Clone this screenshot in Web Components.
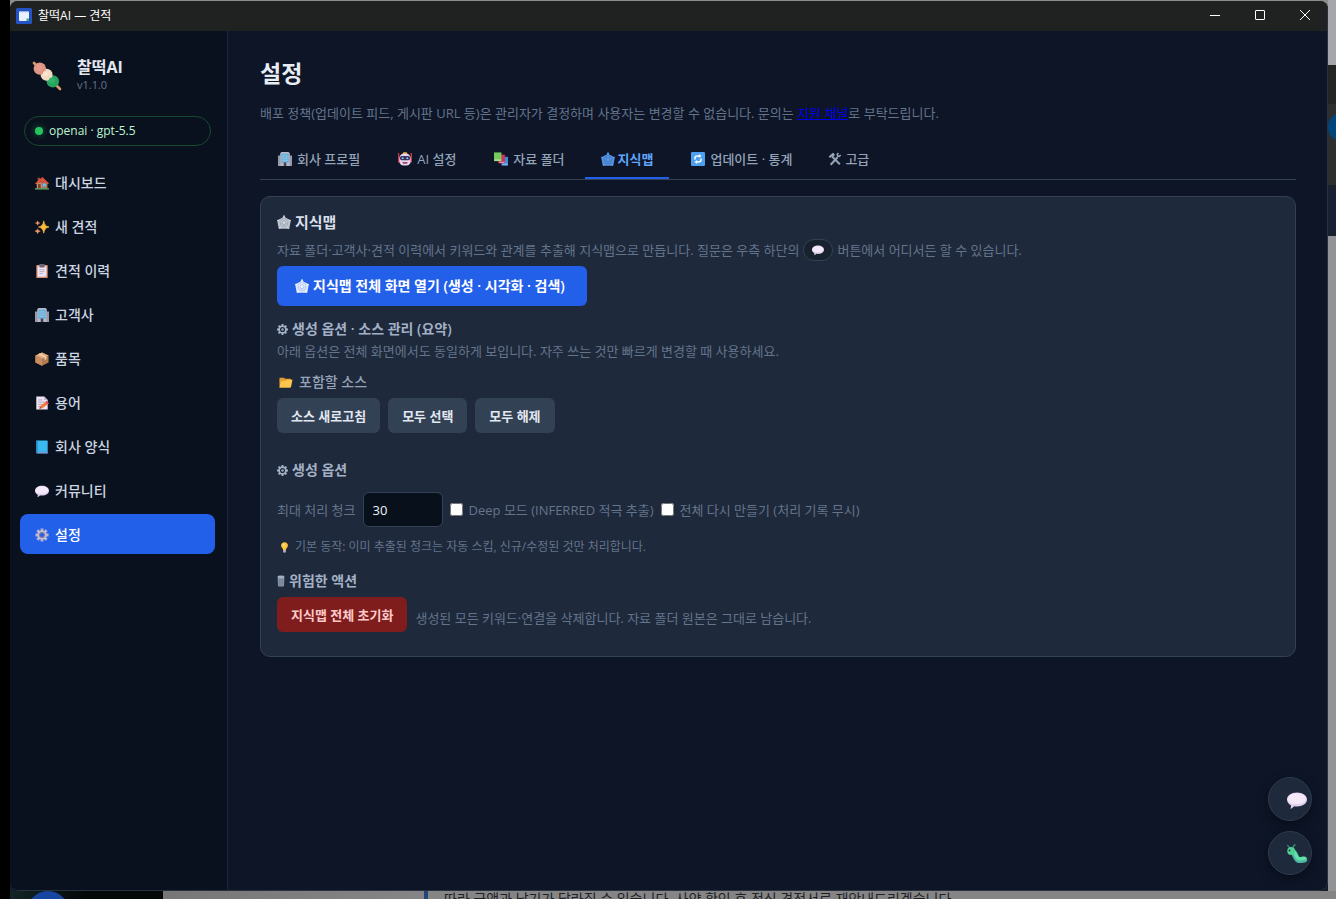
<!DOCTYPE html>
<html lang="ko">
<head>
<meta charset="utf-8">
<meta name="viewport" content="width=device-width, initial-scale=1">
<title>찰떡AI — 견적</title>
<style>
  html, body { margin: 0; height: 100%; }
  body {
    background: #000;
    color: #e2e8f0;
    font-family: "Open Sans", "Noto Sans CJK KR", sans-serif;
    font-size: 13px;
    line-height: 20px;
    --bg: #0d1527;
    --side: #0a111e;
    --card: #1e293b;
    --line: #334155;
    --muted: #64748b;
    --soft: #94a3b8;
    --accent: #2360ea;
  }
</style>
</head>
<body>
<desk-top>
  <app-window>
    <title-bar slot="title">찰떡AI — 견적</title-bar>
    <side-bar slot="side">
      <nav-item icon="house">대시보드</nav-item>
      <nav-item icon="sparkles">새 견적</nav-item>
      <nav-item icon="clipboard">견적 이력</nav-item>
      <nav-item icon="building">고객사</nav-item>
      <nav-item icon="box">품목</nav-item>
      <nav-item icon="memo">용어</nav-item>
      <nav-item icon="book">회사 양식</nav-item>
      <nav-item icon="speech">커뮤니티</nav-item>
      <nav-item icon="gearColor" active>설정</nav-item>
    </side-bar>
    <settings-page>
      <tab-bar slot="tabs">
        <tab-item icon="building">회사 프로필</tab-item>
        <tab-item icon="robot">AI 설정</tab-item>
        <tab-item icon="books">자료 폴더</tab-item>
        <tab-item icon="web" glyph active>지식맵</tab-item>
        <tab-item icon="refresh">업데이트 · 통계</tab-item>
        <tab-item icon="tools" glyph>고급</tab-item>
      </tab-bar>
      <knowledge-panel></knowledge-panel>
    </settings-page>
    <round-button slot="float" icon="speech" label="질문하기"></round-button>
    <round-button slot="float" icon="bug" label="버그 신고"></round-button>
  </app-window>
</desk-top>

<script>
const ICONS = {
  house: `<path d="M2 7h12v7H2z" fill="#c98f6c"/><path d="M8 7h6v7H8z" fill="#a9755c"/><path d="M3 2h3v4H3z" fill="#9c4a3a"/><path d="M8.500 1 0 8.500l1.500 1L8 5l6.500 4.500L16 8.500z" fill="#e2563f"/><path d="M8.500 2 15 8.500H8L5 5z" fill="#d5513c"/><rect x="3.500" y="9" width="3" height="5" fill="#7c3f33"/><rect x="9" y="8.500" width="3.500" height="3.500" fill="#5bc3f0"/><path d="M0 14h16v1.500H0z" fill="#66b567"/>`,
  sparkles: `<path d="M10 1c.9 4.500 2 6 6 7-4 1-5.100 2.500-6 7C9.100 10.500 8 9 4 8c4-1 5.100-2.500 6-7z" fill="#fbb83c" stroke="#fbb83c" stroke-width=".8"/><path d="M3 1c.4 1.500 1 2 2.500 2.500C4 4 3.400 4.500 3 6 2.600 4.500 2 4 .5 3.500 2 3 2.600 2.500 3 1zM3 10c.4 1.700 1.200 2.300 3 2.800-1.800.5-2.600 1-3 2.700-.4-1.700-1.200-2.200-3-2.700 1.800-.5 2.600-1.100 3-2.800z" fill="#f59a68" stroke="#f59a68" stroke-width=".6"/>`,
  clipboard: `<rect x="1.500" y="1" width="13" height="15" rx="1" fill="#d69270"/><rect x="3" y="2.500" width="10" height="12" fill="#f1e6f6"/><path d="M5 0h6v4H5z" fill="#6d6372"/><path d="M5 6.500h6M5 8.700h6M5 11h4" stroke="#a99fb3" stroke-width=".9"/><path d="m10.500 14.500 2.500-2.500v2.500z" fill="#c6b8cf"/>`,
  building: `<path d="M0 4h3v12H0zM13 4h3v12h-3z" fill="#9b98a8"/><path d="M2.500 1.500 4 0h8l1.500 1.500V16h-11z" fill="#b6b9ca"/><path d="M4 2h8v10H4z" fill="#3f9fd4"/><path d="M5.800 2v10M8 2v10M10.200 2v10M4 4.500h8M4 7h8M4 9.500h8" stroke="#b9d4ea" stroke-width=".7"/><rect x="6.500" y="12" width="3" height="4" fill="#4a3f55"/>`,
  box: `<path d="m8 .5 7.500 3.500v8L8 15.800.5 12V4z" fill="#b57a52"/><path d="m8 .5 7.500 3.500L8 7.700.5 4z" fill="#e0ab7e"/><path d="M8 7.700v8.100L.5 12V4z" fill="#c98d62"/><path d="m3.500 2.500 7.500 3.700v3l2-1V5.300L5.500 1.500z" fill="#f2d5a6"/>`,
  memo: `<path d="M1.500.5h9l4 4V15.500h-13z" fill="#efe5f5"/><path d="M10.500.5v4h4z" fill="#c2b4cd"/><path d="M3.500 4.500h5M3.500 7h8M3.500 9.500h5M3.500 12h3" stroke="#a79ab2" stroke-width=".9"/><path d="m5 14.500 1-3L13 6l2.500 2.500-7 5.500z" fill="#f27b3d"/><path d="m12 6.800 1.500-1.300 2.500 2.800-1.500 1.200z" fill="#e4476a"/><path d="m5 14.500.7-2 1.500 1.300z" fill="#54404c"/>`,
  book: `<rect x="1.500" y=".5" width="13" height="15" rx=".8" fill="#3cb9ef"/><path d="M1.500.5h1.800v13H1.500z" fill="#2595d3"/><path d="M2.500 13.500h12v2h-12z" fill="#5870b8"/><path d="M3 13.700h11.500v.9H3z" fill="#8fa9dc"/>`,
  speech: `<path d="M8 2c4.500 0 8 2.400 8 5.600s-3.500 5.600-8 5.600c-.8 0-1.600-.1-2.300-.2-.8 1-1.800 1.700-2.900 2 .4-.9.500-1.900.3-2.800C1.200 11.200 0 9.500 0 7.600 0 4.400 3.500 2 8 2z" fill="#e0d0ef"/><path d="M7.500 2.500c4 0 7 1.500 7.700 4 .2 2.800-3.200 4.700-7.700 4.700S0 9.700.6 6.800C1.300 4 4 2.500 7.500 2.500z" fill="#f3e9f8"/>`,
  gearColor: `<g stroke="#b9b4d0" stroke-width="3.200"><path d="M8 .5v15M.5 8h15M2.700 2.700l10.600 10.600M13.300 2.700 2.700 13.300"/></g><circle cx="8" cy="8" r="5.200" fill="#c4c0da"/><circle cx="8" cy="8" r="3.400" fill="#7773a0"/><circle cx="8" cy="8" r="2.100" fill="#2360ea"/>`,
  robot: `<path d="M.8 1v7M15.200 1v7" stroke="#e5424c" stroke-width="1.300"/><path d="M5 2.500h6L10 .3H6z" fill="#f5a74b"/><path d="M0 7h2v5H0zM14 7h2v5h-2z" fill="#d52e51"/><rect x="1.500" y="2" width="13" height="13.500" rx="5" fill="#e7d5ef"/><rect x="2.200" y="4.500" width="11.600" height="5" rx="2" fill="#42305e"/><circle cx="5.300" cy="7" r="1.100" fill="#6fe1f9"/><circle cx="10.700" cy="7" r="1.100" fill="#6fe1f9"/><rect x="5" y="11.500" width="6" height="1.800" rx=".9" fill="#a04b5d"/>`,
  books: `<rect x="8.500" y="5.500" width="7.500" height="10" fill="#3c8be0"/><path d="M9.500 13h6v2h-6z" fill="#7fb6ec"/><rect x="5" y="3" width="7.500" height="10" fill="#cf3556"/><path d="M6 11h6v1.500H6z" fill="#e690a6"/><rect y=".5" width="8.500" height="10" fill="#76c95c"/><path d="M.8 8.700H8v1.400H.8z" fill="#b9e3a9"/>`,
  refresh: `<rect width="16" height="16" rx="1.500" fill="#4d9ff0"/><g fill="none" stroke="#fff" stroke-width="1.700"><path d="M4.500 8.500V6.800C4.500 5.300 6 4.500 8 4.500h1.500M11.500 7.500v1.700c0 1.500-1.500 2.300-3.500 2.300H6.500"/></g><path d="M9 2.300 12 4.500 9 6.800zM7 9.200 4 11.500 7 13.700z" fill="#fff"/>`,
  web: `<path d="m8 .3 2 2.700 5.800 2.900-.8 4.600-1 5.200H2l-1-5.200L.2 5.900 6 3z" fill="currentColor" opacity=".85"/><g fill="none" stroke="currentColor" stroke-width=".8"><path d="M8 0v9M0 6l8 3M16 6 8 9M2.500 16 8 9M13.500 16 8 9"/></g><g fill="none" stroke="var(--web-gap, #5c687d)" stroke-width=".6" opacity=".6"><path d="m8 3.500 4.800 3.600-1.800 5.700H5L3.200 7.100zM8 6.200l2.400 1.900-.9 2.700h-3l-.9-2.700z"/></g>`,
  tools: `<g stroke="currentColor" fill="none"><path d="m4.500 5 9 9" stroke-width="2.400"/><path d="M11 6 3 14.500" stroke-width="2.400"/><path d="m1.500 6 5-4.300" stroke-width="2.600"/><path d="M14.500 3.500 13 5l-2-.4-.4-2.100L12 1.200" stroke-width="1.800"/></g><path d="M3 4 6 1.200 8 3 5.500 6z" fill="currentColor"/>`,
  gear: `<g stroke="currentColor" fill="none"><circle cx="8" cy="8" r="5" stroke-width="2.600"/><g stroke-width="2.800"><path d="M8 0v3M8 13v3M0 8h3M13 8h3M2.300 2.300l2.200 2.200M11.500 11.500l2.200 2.200M13.700 2.300l-2.200 2.200M4.500 11.500l-2.200 2.200"/></g><circle cx="8" cy="8" r="1" stroke-width="1.600"/></g>`,
  folder: `<path d="M0 2h5.500L7 3.500h7V6H0z" fill="#e89a2c"/><path d="M0 5V14h13z" fill="#f0ac38"/><path d="M2.500 5.800h5L9 4.500h7l-2 9.500H0z" fill="#ffc84c"/>`,
  bulb: `<path d="M8 .5c3 0 5 2.100 5 4.700 0 2.700-2.500 3.500-3 6.300H6C5.500 8.700 3 7.900 3 5.200 3 2.600 5 .5 8 .5z" fill="#fdc33e"/><path d="M5.500 3.500c.6-1 1.500-1.500 2.500-1.500v6z" fill="#ffe79a"/><path d="M6 11.500h4v2.700L9 15.500H7l-1-1.300z" fill="#b5adc0"/>`,
  trash: `<ellipse cx="6" cy="2.600" rx="4.600" ry="1.800" fill="currentColor"/><path d="M1.500 3.500h9L10 14.500c-1 1.300-7 1.300-8 0z" fill="currentColor" opacity=".8"/><path d="M3.800 5v9M6 5v9M8.200 5v9" stroke="#5a687d" stroke-width=".6"/>`,
  bug: `<path d="M2.200 3.500C1.500 1.800.8 1.200 0 1M4.800 3.200C5 1.500 5.800.7 6.800.5" fill="none" stroke="#3e9575" stroke-width="1"/><path d="M3.500 6c3.500 0 3 6.500 6 6.800 2 .3 3-.3 4.300-.4" fill="none" stroke="#4bb5a5" stroke-width="4.800" stroke-linecap="round"/><path d="M4 5.200c3 .6 3 6 5.500 6.600 1.800.3 3-.3 4.300-.3" fill="none" stroke="#5fe0a4" stroke-width="2.800" stroke-linecap="round"/><circle cx="3.300" cy="5.500" r="3.100" fill="#50cf93"/><circle cx="2" cy="5.200" r=".8" fill="#23413c"/>`,
  dango: `<path d="m1.500 1.500 13 13" stroke="#d79a6c" stroke-width="1.300" stroke-linecap="round"/><circle cx="10.900" cy="10.700" r="3.100" fill="#27a55f"/><circle cx="7.800" cy="7.400" r="3" fill="#f3dcc3"/><circle cx="4.400" cy="4.300" r="3.100" fill="#df9484"/><circle cx="3.900" cy="3.800" r="1.800" fill="#e39c8c"/><circle cx="7.300" cy="6.800" r="1.300" fill="#f8e5cf"/><circle cx="10.400" cy="10.200" r="1.500" fill="#35b069"/>`,
  app: `<rect width="16" height="16" rx="1.500" fill="#2454c4"/><rect x="3" y="3.500" width="10" height="9.500" rx="1" fill="#e9f1fb"/><path d="M3.500 3h1v2h-1zM6 3h1v2H6zM9 3h1v2H9zM11.500 3h1v2h-1z" fill="#b9cfee"/><path d="M10.500 10.500h2.500V13h-2.500z" fill="#37b27c"/>`
};

const make = (tag, css, html) => customElements.define(tag, class extends HTMLElement {
  constructor() {
    super();
    this.attachShadow({ mode: "open" });
  }
  connectedCallback() {
    const body = typeof html === "function" ? html(this) : html;
    this.shadowRoot.innerHTML = `<style>*{box-sizing:border-box}${css}</style>${body}`;
  }
});

make("ui-icon",
  `:host{display:inline-block;width:14px;height:14px;flex:none} svg{display:block;width:100%;height:100%;overflow:visible}`,
  el => `<svg viewBox="${el.getAttribute("name") === "trash" ? "1 0 10 16" : "0 0 16 16"}" aria-hidden="true">${ICONS[el.getAttribute("name")]}</svg>`);

/* Desktop: the window with strips of other windows showing at its right and bottom edges */
make("desk-top", `
  :host{display:grid;min-height:100vh;grid-template-columns:10px minmax(0,1fr) 8px;grid-template-rows:minmax(0,1fr) 8px;background:#000}
  .main{grid-column:2;display:grid;background:linear-gradient(#8d8d8d,#8d8d8d) top/100% 20px no-repeat,#141d2c}
  .right{grid-column:3;display:flex;flex-direction:column;overflow:hidden;background:#929397}
  .a{height:65px;background:#a5a6ac}.b{height:39px;background:#232424}
  .c{height:81px;background:#2d2f2f;padding-top:8px}.c i{display:block;width:30px;height:30px;border-radius:50%;background:#00467c}
  .d{height:51px;background:#192131}
  .below{grid-column:2 / 4;grid-row:2;display:flex;overflow:hidden;background:#858585;color:#202126}
  .dark{width:153px;background:linear-gradient(90deg,#132527,#050808 50%);padding-left:17px}
  .dark i{display:block;width:42px;height:42px;border-radius:50%;background:#17459f}
  .sheet{width:261px;background:linear-gradient(90deg,#777,#858585)}
  .bar{width:4px;background:#24447c}
  p{margin:0;padding-left:16px;line-height:16px;white-space:nowrap;font-size:14px}`,
  `<div class="main"><slot></slot></div>
   <div class="right"><div class="a"></div><div class="b"></div><div class="c"><i></i></div><div class="d"></div></div>
   <div class="below"><div class="dark"><i></i></div><div class="sheet"></div><div class="bar"></div><p>따라 금액과 납기가 달라질 수 있습니다. 사양 확인 후 정식 견적서로 재안내드리겠습니다.</p></div>`);

make("app-window", `
  :host{display:grid;position:relative;margin-top:1px;grid-template-rows:30px 1fr;grid-template-columns:218px minmax(0,1fr);border-radius:8px;overflow:hidden;background:var(--bg)}
  ::slotted([slot=title]){grid-column:1 / 3}
  .float{position:absolute;right:16px;bottom:16px;display:flex;flex-direction:column;gap:10px}
  :host::after{content:"";position:absolute;inset:0;border:1px solid #29323f;border-top:0;border-left:0;border-radius:8px;pointer-events:none}`,
  `<slot name="title"></slot><slot name="side"></slot><slot></slot><div class="float"><slot name="float"></slot></div>`);

make("title-bar", `
  :host{display:flex;align-items:center;gap:6px;padding:0 1px 0 6px;background:#202121;color:#fff;font-size:12px}
  ui-icon{width:16px;height:16px}
  .grow{flex:1}
  .ctl{display:flex;align-self:start}
  button{width:45px;height:28px;padding:0;border:0;background:none;color:#fff;display:grid;place-items:center}
  svg{width:10px;height:10px;fill:none;stroke:currentColor;stroke-width:1;overflow:visible}`,
  `<ui-icon name="app"></ui-icon><span><slot></slot></span><span class="grow"></span>
   <div class="ctl">
   <button aria-label="최소화"><svg viewBox="0 0 10 10"><path d="M0 5.500h10"/></svg></button>
   <button aria-label="최대화"><svg viewBox="0 0 10 10"><rect x=".5" y=".5" width="9" height="9" rx=".5"/></svg></button>
   <button aria-label="닫기"><svg viewBox="0 0 10 10"><path d="m0 0 10 10M10 0 0 10"/></svg></button></div>`);

make("side-bar", `
  :host{display:flex;flex-direction:column;background:var(--side);border-right:1px solid #1b2638;padding:25px 12px 12px 10px}
  .brand{display:flex;align-items:center;gap:14px;padding-left:11px;height:40px}
  .brand ui-icon{width:32px;height:32px}
  .words{padding-bottom:4px}
  .name{font-size:16px;line-height:22px;font-weight:700}
  .ver{font-size:11px;line-height:14px;color:var(--muted)}
  .pill{display:flex;align-items:center;gap:6px;height:30px;margin:20px 4px 16px;padding:0 10px;border:1px solid #17492f;border-radius:15px;color:#bbf7d0;font-size:12px}
  .dot{width:8px;height:8px;border-radius:50%;background:#22c55e;box-shadow:0 0 6px #22c55e88}
  nav{display:flex;flex-direction:column;gap:4px}`,
  `<div class="brand"><ui-icon name="dango"></ui-icon><div class="words"><div class="name">찰떡AI</div><div class="ver">v1.1.0</div></div></div>
   <div class="pill"><span class="dot"></span><span>openai · gpt-5.5</span></div>
   <nav><slot></slot></nav>`);

make("nav-item", `
  :host{display:block}
  a{display:flex;align-items:center;gap:6px;height:40px;padding:1px 15px 0;border-radius:8px;color:#cbd5e1;font-size:14px;font-weight:500;text-decoration:none}
  :host([active]) a{background:var(--accent);color:#fff}`,
  el => `<a href="#"><ui-icon name="${el.getAttribute("icon")}"></ui-icon><span><slot></slot></span></a>`);

make("settings-page", `
  :host{display:block;padding:26px 32px 24px}
  h1{margin:0;font-size:23px;line-height:32px;font-weight:700;color:#e8edf4}
  p{margin:14px 0 16px;color:var(--muted)}
  a{color:#0000ee}`,
  `<h1>설정</h1>
   <p>배포 정책(업데이트 피드, 게시판 URL 등)은 관리자가 결정하며 사용자는 변경할 수 없습니다. 문의는 <a href="#">지원 채널</a>로 부탁드립니다.</p>
   <slot name="tabs"></slot><slot></slot>`);

make("tab-bar", `:host{display:flex;gap:4px;height:40px;border-bottom:1px solid #334155;margin-bottom:16px}`, `<slot></slot>`);

make("tab-item", `
  :host{display:block;height:40px;--web-gap:#1d4a8f}
  button{display:flex;align-items:center;gap:5px;height:100%;padding:1px 16px 0 18px;border:0;border-bottom:2px solid transparent;background:none;color:var(--soft);font:inherit;font-weight:500}
  :host([glyph]) button{gap:3px;padding-left:16px}
  :host([active]) button{color:#60a5fa;border-color:var(--accent);font-weight:700}`,
  el => `<button role="tab"><ui-icon name="${el.getAttribute("icon")}"></ui-icon><span><slot></slot></span></button>`);

make("ui-button", `
  :host{display:inline-block}
  button{display:flex;align-items:center;gap:4px;height:35px;padding:0 14px;border:0;border-radius:6px;background:#334155;color:#e2e8f0;font:inherit;font-weight:600}
  :host([kind=primary]) button{height:40px;min-width:310px;padding:0 18px;background:var(--accent);color:#fff;font-size:14px;--web-gap:#4a7bea}
  :host([kind=danger]) button{background:#7f1d1d;color:#fecaca}`,
  `<button><slot></slot></button>`);

make("knowledge-panel", `
  :host{display:block;padding:15px 16px 24px;border:1px solid var(--line);border-radius:10px;background:var(--card);color:var(--muted)}
  h3,h4,p{margin:0;display:flex;align-items:center}
  h3{gap:4px;font-size:15px;color:#d8dfea}
  h4{gap:4px;font-size:14px;font-weight:600;color:#a3b1c6}
  h4 ui-icon{width:11px;height:11px}
  h4.trash ui-icon{width:8px;height:12px}
  .lead{margin:7px 0 5px;min-height:22px;gap:4px}
  .chip{display:grid;place-items:center;width:30px;height:22px;border:1px solid var(--line);border-radius:11px;background:#18222f}
  .chip ui-icon{width:12px;height:12px}
  .options{margin-top:13px}.summary{margin:2px 0 11px}
  .source{gap:6px;padding-left:2px;font-size:14px;font-weight:500;color:var(--soft);margin-bottom:6px}
  .source ui-icon{width:14px;height:13px}
  .row{display:flex;gap:8px}
  .create{margin:27px 0 12px}
  .row.fields{align-items:center;gap:7px}
  .fields label{display:flex;align-items:center;gap:6px}
  input[type=text]{width:80px;height:35px;padding:0 9px;border:1px solid var(--line);border-radius:6px;background:#08101c;color:#f1f5f9;font:inherit}
  input[type=checkbox]{width:13px;height:13px;margin:0}
  .hint{margin:10px 0 14px;padding-left:2px;gap:5px;font-size:12px}
  .hint ui-icon{width:11px;height:11px}
  .trash{margin-bottom:6px}
  .reset{align-items:end}.reset p{padding-bottom:4px}
  ui-button{flex:none}`,
  `<h3><ui-icon name="web"></ui-icon><span>지식맵</span></h3>
   <p class="lead"><span>자료 폴더·고객사·견적 이력에서 키워드와 관계를 추출해 지식맵으로 만듭니다. 질문은 우측 하단의</span><span class="chip"><ui-icon name="speech"></ui-icon></span><span>버튼에서 어디서든 할 수 있습니다.</span></p>
   <div class="row"><ui-button kind="primary"><ui-icon name="web"></ui-icon><span>지식맵 전체 화면 열기 (생성 · 시각화 · 검색)</span></ui-button></div>
   <h4 class="options"><ui-icon name="gear"></ui-icon><span>생성 옵션 · 소스 관리 (요약)</span></h4>
   <p class="summary">아래 옵션은 전체 화면에서도 동일하게 보입니다. 자주 쓰는 것만 빠르게 변경할 때 사용하세요.</p>
   <h4 class="source"><ui-icon name="folder"></ui-icon><span>포함할 소스</span></h4>
   <div class="row"><ui-button>소스 새로고침</ui-button><ui-button>모두 선택</ui-button><ui-button>모두 해제</ui-button></div>
   <h4 class="create"><ui-icon name="gear"></ui-icon><span>생성 옵션</span></h4>
   <div class="row fields">
     <label for="chunks"><span>최대 처리 청크</span></label><input id="chunks" type="text" inputmode="numeric" value="30">
     <label><input type="checkbox"><span>Deep 모드 (INFERRED 적극 추출)</span></label>
     <label><input type="checkbox"><span>전체 다시 만들기 (처리 기록 무시)</span></label>
   </div>
   <p class="hint"><ui-icon name="bulb"></ui-icon><span>기본 동작: 이미 추출된 청크는 자동 스킵, 신규/수정된 것만 처리합니다.</span></p>
   <h4 class="trash"><ui-icon name="trash"></ui-icon><span>위험한 액션</span></h4>
   <div class="row reset"><ui-button kind="danger">지식맵 전체 초기화</ui-button><p>생성된 모든 키워드·연결을 삭제합니다. 자료 폴더 원본은 그대로 남습니다.</p></div>`);

make("round-button", `
  :host{display:block}
  button{display:flex;align-items:center;justify-content:flex-end;width:44px;height:44px;padding:2px 4px 0 0;border:1px solid #2f3c4e;border-radius:50%;background:var(--card);box-shadow:0 4px 12px #0006}
  ui-icon{width:20px;height:20px}`,
  el => `<button aria-label="${el.getAttribute("label")}"><ui-icon name="${el.getAttribute("icon")}"></ui-icon></button>`);
</script>
</body>
</html>
